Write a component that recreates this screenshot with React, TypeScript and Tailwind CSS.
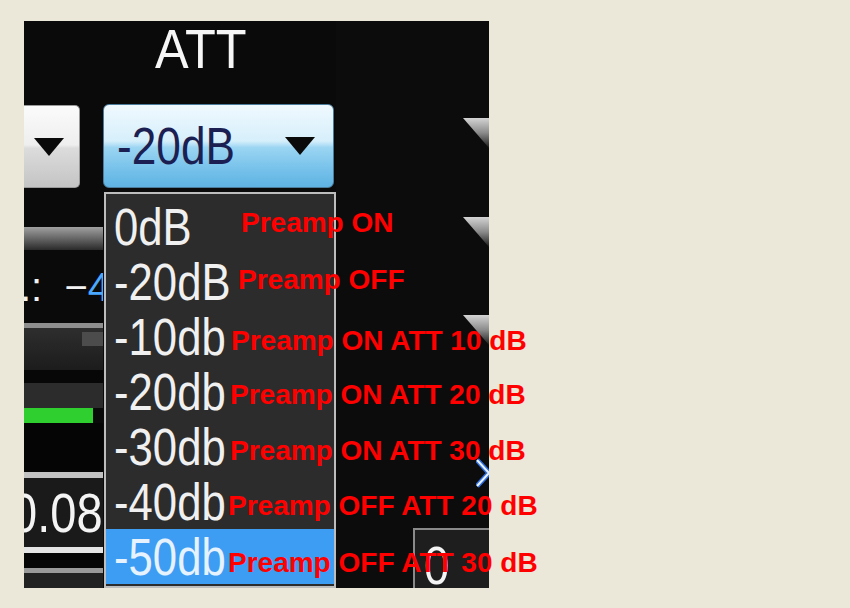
import React from "react";

const items = ["0dB", "-20dB", "-10db", "-20db", "-30db", "-40db", "-50db"];

const labels = [
  { t: "Preamp ON", cls: "top-[15px] left-[135px]" },
  { t: "Preamp OFF", cls: "top-[72px] left-[132px]" },
  { t: "Preamp ON ATT 10 dB", cls: "top-[133px] left-[125px]" },
  { t: "Preamp ON ATT 20 dB", cls: "top-[187px] left-[124px]" },
  { t: "Preamp ON ATT 30 dB", cls: "top-[243px] left-[124px]" },
  { t: "Preamp OFF ATT 20 dB", cls: "top-[298px] left-[122px]" },
  { t: "Preamp OFF ATT 30 dB", cls: "top-[355px] left-[122px]" },
];

function Arrow() {
  return (
    <svg width="30" height="18" viewBox="0 0 30 18">
      <polygon points="0,0 30,0 15,18" fill="#0a0a0a" />
    </svg>
  );
}

function Wedge({ id }: { id: string }) {
  return (
    <svg width="26" height="30" viewBox="0 0 26 30">
      <defs>
        <linearGradient id={id} x1="0" y1="0" x2="0" y2="1">
          <stop offset="0" stopColor="#d4d4d4" />
          <stop offset="0.5" stopColor="#8a8a8a" />
          <stop offset="1" stopColor="#1a1a1a" />
        </linearGradient>
      </defs>
      <polygon points="0,0 26,0 26,30" fill={`url(#${id})`} />
    </svg>
  );
}

export default function App() {
  return (
    <div className="w-[850px] h-[608px] bg-[#ebe7d9] pt-[21px] pl-[24px] font-['Liberation_Sans',Arial,sans-serif]">
      <div className="relative flex w-[465px] h-[567px] bg-[#0a0a0a]">
        {/* left column */}
        <div className="w-[79px] flex flex-col overflow-hidden">
          <div className="h-[84px]" />
          <div className="h-[83px] w-[56px] rounded-r-[5px] border border-[#9a9a9a] border-l-0 bg-[linear-gradient(to_bottom,#fbfbfb_0%,#eeeeee_48%,#dcdcdc_52%,#c4c4c4_100%)] flex items-center pl-[10px]">
            <Arrow />
          </div>
          <div className="h-[39px]" />
          <div className="h-[23px] bg-[linear-gradient(to_bottom,#a0a0a0,#5a5a5a_60%,#2a2a2a)]" />
          <div className="h-[73px] flex items-center whitespace-nowrap overflow-hidden">
            <span className="ml-[-4px] text-[40px] leading-none text-[#f2f2f2]">
              .:{"\u00a0\u00a0"}−<span className="text-[#4aa8ff]">4</span>
            </span>
          </div>
          <div className="h-[5px] bg-[#8e8e8e]" />
          <div className="h-[42px] bg-[linear-gradient(to_bottom,#2e2e2e,#1c1c1c)] flex justify-end">
            <div className="w-[21px] h-[14px] mt-[4px] bg-[#4c4c4c]" />
          </div>
          <div className="h-[13px] bg-[#070707]" />
          <div className="h-[25px] bg-[#2c2c2c]" />
          <div className="h-[15px] w-[69px] bg-[#2fcf2f]" />
          <div className="h-[49px] bg-[#050505]" />
          <div className="h-[6px] bg-[#c2c2c2]" />
          <div className="h-[69px] bg-[#1a1a1a] flex items-center whitespace-nowrap overflow-hidden">
            <span className="ml-[-13px] inline-block origin-left scale-x-[0.84] text-[56px] leading-none text-[#f4f4f4]">
              0.08
            </span>
          </div>
          <div className="h-[6px] bg-[#e4e4e4]" />
          <div className="h-[15px] bg-[#060606]" />
          <div className="h-[5px] bg-[#9a9a9a]" />
          <div className="flex-1 bg-[#222222]" />
        </div>

        {/* middle column */}
        <div className="w-[233px] flex flex-col">
          <div className="h-[83px] pl-[52px]">
            <span className="inline-block origin-left scale-x-[0.9] text-[56px] leading-none text-[#f6f6f6]">
              ATT
            </span>
          </div>
          <div className="h-[84px] w-[231px] rounded-[6px] border border-[#4b7c9c] bg-[linear-gradient(to_bottom,#f0f9fe_0%,#d6effb_44%,#9bd5f2_52%,#74c0ea_80%,#5eb3e2_100%)] flex items-center justify-between pl-[13px] pr-[18px] overflow-hidden">
            <span className="inline-block origin-left scale-x-[0.85] text-[52px] leading-none text-[#1c1f52]">
              -20dB
            </span>
            <Arrow />
          </div>
          <div className="h-[4px]" />
          <div className="relative ml-[1px] w-[232px] flex-1 border-2 border-[#bdbdbd] bg-[#2c2c2c] pt-[5px]">
            {items.map((t, i) => (
              <div
                key={i}
                className={
                  "h-[55px] flex items-center pl-[8px] " +
                  (i === items.length - 1 ? "bg-[#3d9df3] text-[#e6f3ff]" : "text-[#f0f0f0]")
                }
              >
                <span className="inline-block origin-left scale-x-[0.84] text-[52px] leading-none">{t}</span>
              </div>
            ))}
            {labels.map((l, i) => (
              <div
                key={i}
                className={
                  "absolute z-10 whitespace-nowrap font-bold text-[28px] leading-none text-[#ff0000] " + l.cls
                }
              >
                {l.t}
              </div>
            ))}
          </div>
        </div>

        {/* right column */}
        <div className="flex-1 flex flex-col bg-[#0c0c0c]">
          <div className="h-[97px]" />
          <div className="h-[30px] flex justify-end">
            <Wedge id="w1" />
          </div>
          <div className="h-[69px]" />
          <div className="h-[30px] flex justify-end">
            <Wedge id="w2" />
          </div>
          <div className="h-[68px]" />
          <div className="h-[30px] flex justify-end">
            <Wedge id="w3" />
          </div>
          <div className="h-[110px]" />
          <div className="h-[35px] flex justify-end items-center">
            <svg width="13" height="30" viewBox="0 0 13 30">
              <polyline points="1,2 13,15 1,28" fill="none" stroke="#2f6fe0" strokeWidth="5" />
              <polyline points="1,2 13,15 1,28" fill="none" stroke="#eaf2ff" strokeWidth="2" />
            </svg>
          </div>
          <div className="h-[38px]" />
          <div className="h-[60px] ml-[77px] border-t-2 border-l-2 border-[#8a8a8a] bg-[#1e1e1e] pl-[9px] pt-[8px]">
            <span className="inline-block origin-left scale-x-[0.84] text-[54px] leading-none text-[#f4f4f4]">0</span>
          </div>
        </div>
      </div>
    </div>
  );
}
